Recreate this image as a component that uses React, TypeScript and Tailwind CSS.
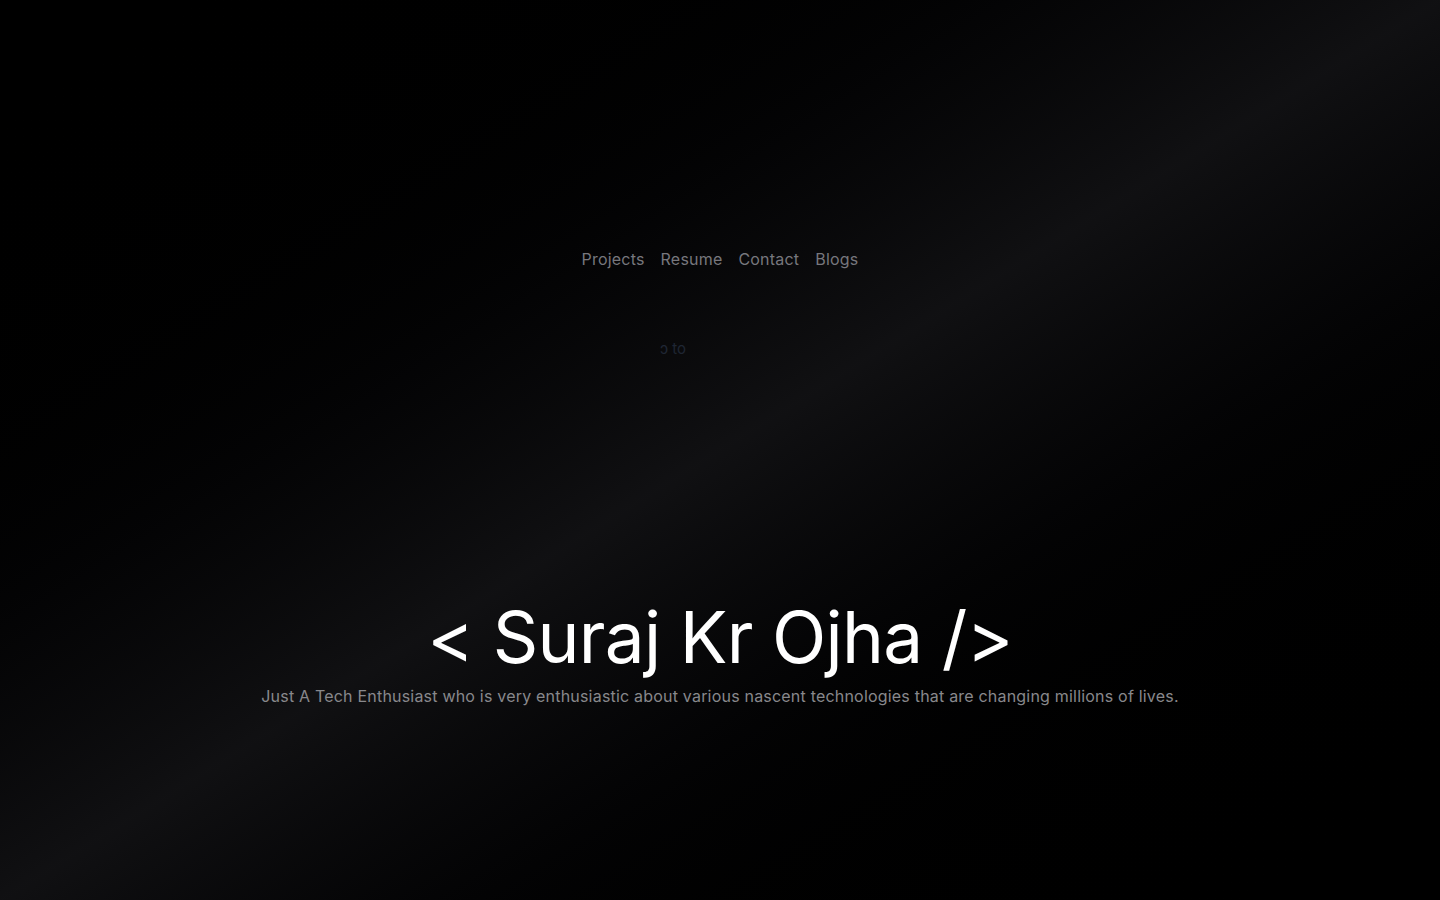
import React from "react";

export default function App() {
  return (
    <div
      className="relative w-screen h-[900px] overflow-hidden bg-gradient-to-tl from-black via-zinc-600/20 to-black bg-black"
      style={{ fontFamily: "Inter, 'Noto Sans', sans-serif" }}
    >
      <div className="flex flex-col items-center">
        <nav className="mt-[247px] flex items-center gap-4 text-base tracking-[0.2px] text-[#77777d]">
          <a className="hover:text-zinc-300">Projects</a>
          <a className="hover:text-zinc-300">Resume</a>
          <a className="hover:text-zinc-300">Contact</a>
          <a className="hover:text-zinc-300">Blogs</a>
        </nav>
        <div className="mt-[67px] text-[15px] text-[#1f2633] ml-[-94px]">ɔ to</div>
        <h1 className="mt-[241px] text-[71px] leading-none text-white whitespace-nowrap tracking-[-0.01em]">
          &lt; Suraj Kr Ojha /&gt;
        </h1>
        <h2 className="mt-[11px] text-base tracking-[0.2px] text-[#88888c] whitespace-nowrap">
          Just A Tech Enthusiast who is very enthusiastic about various nascent technologies that are changing millions of lives.
        </h2>
      </div>
    </div>
  );
}
